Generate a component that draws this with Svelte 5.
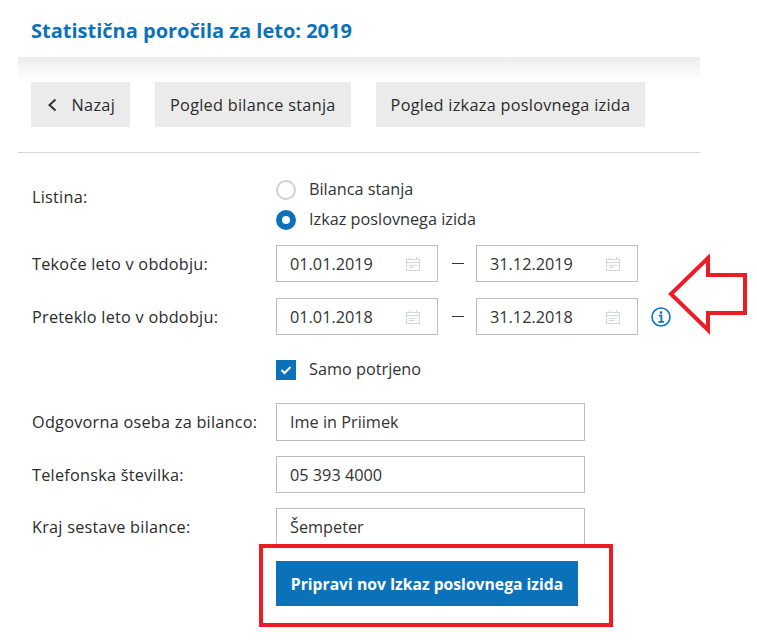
<script>
    const dateRows = [
        { label: 'Tekoče leto v obdobju:', from: '01.01.2019', to: '31.12.2019', info: false },
        { label: 'Preteklo leto v obdobju:', from: '01.01.2018', to: '31.12.2018', info: true }
    ]
    const textRows = [
        { label: 'Odgovorna oseba za bilanco:', value: 'Ime in Priimek' },
        { label: 'Telefonska številka:', value: '05 393 4000' },
        { label: 'Kraj sestave bilance:', value: 'Šempeter' }
    ]
</script>

{#snippet calendar()}
    <svg class="cal" width="14" height="14" viewBox="0 0 14 14" fill="none" stroke="#d3d6da" stroke-width="1">
        <rect x="0.5" y="2.5" width="13" height="11" />
        <path d="M3.5 0v3M10.5 0v3M0.5 5.5h13M3 8.5h8M3 10.5h5" />
    </svg>
{/snippet}

<div class="page">
    <h1>Statistična poročila za leto: 2019</h1>

    <div class="toolbar">
        <button class="btn back">
            <svg width="10" height="14" viewBox="0 0 10 14" fill="none" stroke="#333" stroke-width="2">
                <path d="M8.5 1.5 2.5 7l6 5.5" />
            </svg>
            Nazaj
        </button>
        <button class="btn">Pogled bilance stanja</button>
        <button class="btn">Pogled izkaza poslovnega izida</button>
    </div>

    <div class="form">
        <div class="row radios-row">
            <span class="label">Listina:</span>
            <div class="radios">
                <div class="option"><span class="radio"></span>Bilanca stanja</div>
                <div class="option"><span class="radio checked"></span>Izkaz poslovnega izida</div>
            </div>
        </div>

        {#each dateRows as row}
            <div class="row date-row">
                <span class="label">{row.label}</span>
                <div class="field date">{row.from}{@render calendar()}</div>
                <span class="dash"></span>
                <div class="field date">{row.to}{@render calendar()}</div>
                {#if row.info}
                    <svg class="info" width="20" height="20" viewBox="0 0 20 20" fill="none" stroke="#0b75be">
                        <circle cx="10" cy="10" r="9" stroke-width="1.6" />
                        <circle cx="10" cy="5.6" r="1.3" fill="#0b75be" stroke="none" />
                        <path d="M7.8 8.6H10.4V14.6M7.4 14.8h5.6" stroke-width="1.8" />
                    </svg>
                {/if}
            </div>
        {/each}

        <div class="row check-row">
            <span class="label"></span>
            <div class="option">
                <span class="checkbox">
                    <svg width="12" height="10" viewBox="0 0 12 10" fill="none" stroke="#fff" stroke-width="2">
                        <path d="M1.5 5 4.5 8 10.5 2" />
                    </svg>
                </span>
                Samo potrjeno
            </div>
        </div>

        {#each textRows as row}
            <div class="row text-row">
                <span class="label">{row.label}</span>
                <div class="field text">{row.value}</div>
            </div>
        {/each}

        <div class="row submit-row">
            <span class="label"></span>
            <button class="submit">Pripravi nov Izkaz poslovnega izida</button>
        </div>
    </div>

    <!-- annotations drawn on top of the screenshot -->
    <svg class="arrow" width="84" height="84" viewBox="0 0 84 84" fill="none" stroke="#ed1c24" stroke-width="4">
        <path d="M5 40 42 4V21H79V59H42V76Z" />
    </svg>
    <div class="highlight"></div>
</div>

<style>
    :global(body) {
        background: #fff;
        font-family: "Open Sans", sans-serif;
        color: #333;
    }

    .page {
        position: relative;
        width: 757px;
        height: 640px;
        box-sizing: border-box;
        padding-left: 18px;
        overflow: hidden;
    }

    h1 {
        margin: 0;
        padding: 18px 0 0 13px;
        height: 57px;
        box-sizing: border-box;
        font-size: 20px;
        line-height: 26px;
        font-weight: 700;
        color: #0b72ba;
    }

    .toolbar {
        width: 682px;
        height: 96px;
        box-sizing: border-box;
        padding: 25px 0 0 13px;
        display: flex;
        gap: 25px;
        align-items: flex-start;
        background: linear-gradient(#ececec, #fff 24px);
        border-bottom: 1px solid #d5d5d5;
    }

    .btn {
        height: 45px;
        padding: 0 15px;
        border: none;
        background: #ebebeb;
        color: #2b2b2b;
        font: 500 16.25px "Open Sans", sans-serif;
        letter-spacing: 0.28px;
        display: flex;
        align-items: center;
    }

    .back {
        gap: 14.6px;
        padding-left: 16px;
    }

    .form {
        width: 682px;
        padding: 24px 0 0 14px;
        box-sizing: border-box;
    }

    .row {
        display: flex;
        align-items: center;
    }

    .label {
        width: 244px;
        flex: none;
        font-size: 16.25px;
        font-weight: 500;
        letter-spacing: 0.25px;
        color: #2b2b2b;
    }

    .radios-row {
        align-items: flex-start;
        height: 68px;
    }

    .radios-row .label {
        padding-top: 9px;
    }

    .radios {
        display: flex;
        flex-direction: column;
        gap: 4px;
    }

    .option {
        display: flex;
        align-items: center;
        gap: 13px;
        height: 26px;
        box-sizing: border-box;
        padding-bottom: 2px;
        font-size: 16.25px;
    }

    .radio {
        width: 20px;
        height: 20px;
        margin-bottom: -2px;
        box-sizing: border-box;
        border: 2px solid #d0d0d0;
        border-radius: 50%;
    }

    .radio.checked {
        border: 6px solid #0b72ba;
    }

    .date-row {
        height: 37px;
        margin-bottom: 16px;
    }

    .field {
        box-sizing: border-box;
        height: 37px;
        border: 1px solid #bdbdbd;
        padding: 0 13px;
        font-size: 16.25px;
        display: flex;
        align-items: center;
    }

    .date {
        width: 162px;
        justify-content: space-between;
    }

    .cal {
        margin-right: 4px;
    }

    .dash {
        width: 12px;
        height: 1px;
        margin: 0 12px 0 14px;
        background: #333;
    }

    .info {
        margin-left: 13px;
    }

    .check-row {
        margin-top: 20px;
        height: 30px;
        margin-bottom: 18px;
    }

    .text-row {
        margin-bottom: 15px;
    }

    .text-row .field {
        width: 309px;
    }

    .check-row + .text-row .field {
        height: 38px;
    }

    .checkbox {
        width: 20px;
        height: 20px;
        margin-bottom: -2px;
        background: #0b72ba;
        display: flex;
        align-items: center;
        justify-content: center;
    }

    .submit-row {
        margin-top: 16px;
    }

    .submit {
        width: 302px;
        height: 45px;
        border: none;
        background: #0b72ba;
        color: #fff;
        font: 700 15.7px "Open Sans", sans-serif;
    }

    .arrow {
        position: absolute;
        left: 666px;
        top: 254px;
    }

    .highlight {
        position: absolute;
        left: 259px;
        top: 544px;
        width: 354px;
        height: 83px;
        box-sizing: border-box;
        border: 4px solid #ed1c24;
    }
</style>
